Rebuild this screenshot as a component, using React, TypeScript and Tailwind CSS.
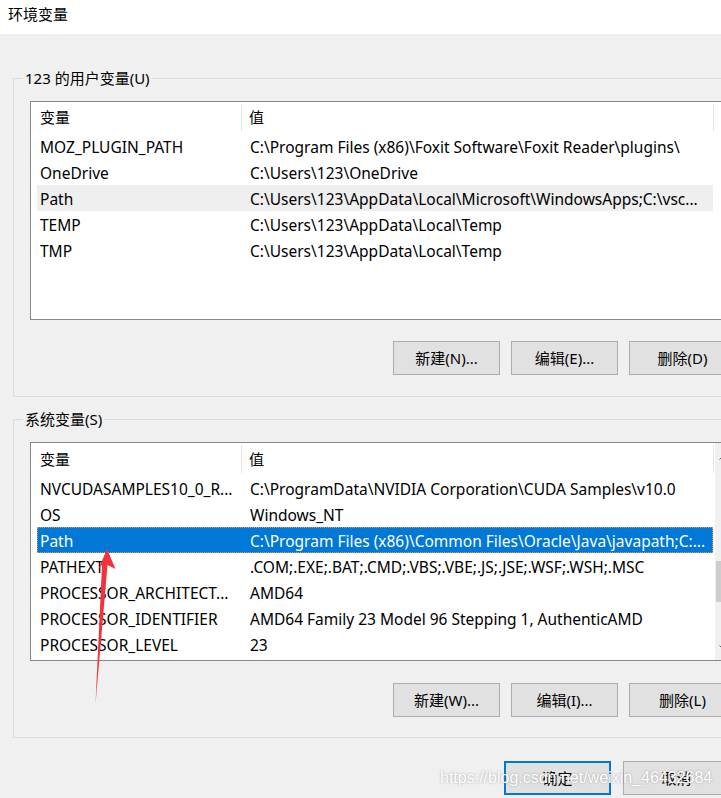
import React from "react";

interface EnvVar {
  name: string;
  value: string;
}

const userVars: EnvVar[] = [
  { name: "MOZ_PLUGIN_PATH", value: "C:\\Program Files (x86)\\Foxit Software\\Foxit Reader\\plugins\\" },
  { name: "OneDrive", value: "C:\\Users\\123\\OneDrive" },
  { name: "Path", value: "C:\\Users\\123\\AppData\\Local\\Microsoft\\WindowsApps;C:\\vsc..." },
  { name: "TEMP", value: "C:\\Users\\123\\AppData\\Local\\Temp" },
  { name: "TMP", value: "C:\\Users\\123\\AppData\\Local\\Temp" },
];

const systemVars: EnvVar[] = [
  { name: "NVCUDASAMPLES10_0_R...", value: "C:\\ProgramData\\NVIDIA Corporation\\CUDA Samples\\v10.0" },
  { name: "OS", value: "Windows_NT" },
  { name: "Path", value: "C:\\Program Files (x86)\\Common Files\\Oracle\\Java\\javapath;C:..." },
  { name: "PATHEXT", value: ".COM;.EXE;.BAT;.CMD;.VBS;.VBE;.JS;.JSE;.WSF;.WSH;.MSC" },
  { name: "PROCESSOR_ARCHITECT...", value: "AMD64" },
  { name: "PROCESSOR_IDENTIFIER", value: "AMD64 Family 23 Model 96 Stepping 1, AuthenticAMD" },
  { name: "PROCESSOR_LEVEL", value: "23" },
];

function WinButton({ label, focused }: { label: string; focused?: boolean }) {
  return (
    <div
      className={`w-[107px] h-[34px] flex items-center justify-center bg-[#e1e1e1] text-[15px] text-black ${
        focused ? "border-2 border-[#0078d7]" : "border border-[#adadad]"
      }`}
    >
      {label}
    </div>
  );
}

function VarList({
  rows,
  selected,
  active,
  scrollbar,
}: {
  rows: EnvVar[];
  selected: number;
  active?: boolean;
  scrollbar?: boolean;
}) {
  return (
    <div className="ml-[7px] w-[703px] h-[219px] border border-[#828790] bg-white flex overflow-hidden">
      <div className="w-[684px] flex flex-col">
        {/* column header */}
        <div className={`flex shrink-0 text-[15px] ${scrollbar ? "h-[32px]" : "h-[31px]"}`}>
          <div className="w-[210px] pl-[9px] flex items-center">变量</div>
          <div className="w-px bg-[#e5e5e5] my-[2px]" />
          <div className="w-[471px] pl-[7px] flex items-center">值</div>
          <div className="w-px bg-[#e5e5e5] my-[2px]" />
        </div>
        <div className="pl-[6px] flex flex-col">
          {rows.map((row, i) => {
            const isSel = i === selected;
            let rowCls = "border border-transparent";
            if (isSel && active) rowCls = "bg-[#0078d7] text-white border border-dotted border-[#e39a3c]";
            else if (isSel) rowCls = "bg-[#efefef] border border-transparent";
            return (
              <div
                key={row.name}
                className={`w-[676px] h-[26px] pt-[4px] flex items-center text-[15.5px] whitespace-nowrap ${rowCls}`}
              >
                <div className="w-[204px] pl-[2px] overflow-hidden">{row.name}</div>
                <div className="flex-1 pl-[8px] overflow-hidden">{row.value}</div>
              </div>
            );
          })}
        </div>
      </div>
      {scrollbar && (
        <div className="w-[17px] bg-[#f0f0f0] flex flex-col items-center">
          <svg className="mt-[12px]" width="9" height="5" viewBox="0 0 9 5">
            <path d="M0.5 4.5 L4.5 0.5 L8.5 4.5" fill="none" stroke="#606060" strokeWidth="1" />
          </svg>
          <div className="mt-[101px] w-[15px] h-[41px] bg-[#cdcdcd]" />
          <svg className="mt-auto mb-[10px]" width="9" height="5" viewBox="0 0 9 5">
            <path d="M0.5 0.5 L4.5 4.5 L8.5 0.5" fill="none" stroke="#606060" strokeWidth="1" />
          </svg>
        </div>
      )}
    </div>
  );
}

export default function App() {
  return (
    <div className="relative w-[721px] h-[798px] overflow-hidden bg-[#f0f0f0] text-black font-['Noto_Sans','Noto_Sans_CJK_SC',sans-serif]">
      <div className="w-[760px]">
        {/* title bar */}
        <div className="h-[34px] bg-white flex items-center pl-[8px] pb-[5px] text-[15px]">环境变量</div>

        {/* user variables */}
        <fieldset className="mt-[34px] ml-[13px] w-[734px] border border-[#dcdcdc] pl-[9px] pt-[13px] pb-[21px]">
          <legend className="px-[2px] h-[20px] leading-[20px] text-[15px]">123 的用户变量(U)</legend>
          <VarList rows={userVars} selected={2} />
          <div className="mt-[21px] ml-[370px] flex gap-[11px]">
            <WinButton label="新建(N)..." />
            <WinButton label="编辑(E)..." />
            <WinButton label="删除(D)" />
          </div>
        </fieldset>

        {/* system variables */}
        <fieldset className="mt-[12px] ml-[13px] w-[734px] border border-[#dcdcdc] pl-[9px] pt-[13px] pb-[20px]">
          <legend className="px-[2px] h-[20px] leading-[20px] text-[15px]">系统变量(S)</legend>
          <VarList rows={systemVars} selected={2} active scrollbar />
          <div className="mt-[22px] ml-[370px] flex gap-[11px]">
            <WinButton label="新建(W)..." />
            <WinButton label="编辑(I)..." />
            <WinButton label="删除(L)" />
          </div>
        </fieldset>

        {/* dialog buttons */}
        <div className="mt-[23px] pl-[504px] flex gap-[12px]">
          <WinButton label="确定" focused />
          <WinButton label="取消" />
        </div>
      </div>

      {/* red annotation arrow */}
      <svg className="absolute left-0 top-0 pointer-events-none" width="721" height="798">
        <polygon points="107,549 115.5,569 107.5,565 95.5,704 102,565 98.5,569" fill="#f3323c" />
      </svg>

      {/* watermark */}
      <div
        className="absolute left-[440px] top-[768px] text-[16px] leading-[20px] text-white font-['Liberation_Sans',Arial,sans-serif] whitespace-nowrap pointer-events-none"
        style={{ textShadow: "0 0 2px rgba(120,120,120,0.7)" }}
      >
        https://blog.csdn.net/weixin_46432684
      </div>
    </div>
  );
}
